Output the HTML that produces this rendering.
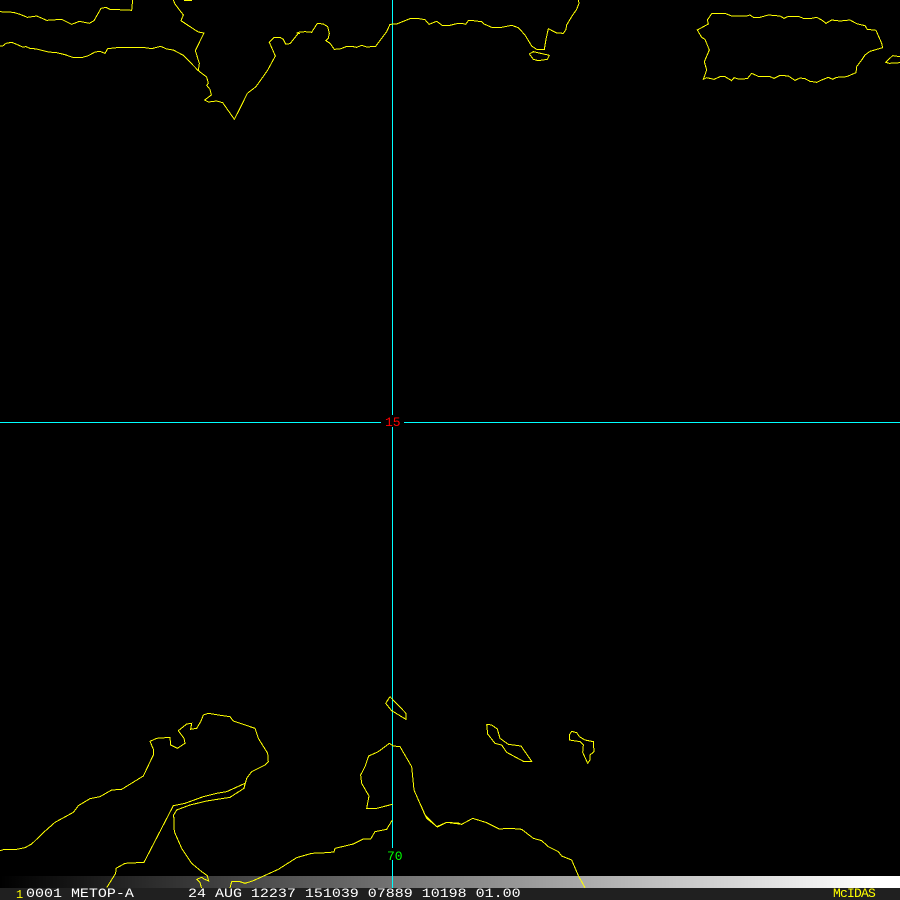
<!DOCTYPE html>
<html><head><meta charset="utf-8"><style>
html,body{margin:0;padding:0;background:#000;width:900px;height:900px;overflow:hidden}
svg{position:absolute;left:0;top:0;display:block}
polyline{fill:none;stroke:#ff0;stroke-width:1;vector-effect:non-scaling-stroke;shape-rendering:crispEdges}
text{font-family:"Liberation Mono",monospace;font-size:13px}
</style></head><body>
<svg width="900" height="900" viewBox="0 0 900 900">
<defs><linearGradient id="g" x1="0" x2="1" y1="0" y2="0"><stop offset="0" stop-color="#000"/><stop offset=".97" stop-color="#fff"/><stop offset="1" stop-color="#fff"/></linearGradient></defs>
<rect width="900" height="900" fill="#000"/>
<rect x="0" y="876" width="900" height="12" fill="url(#g)"/>
<rect x="392" y="0" width="1" height="415" fill="#0ff"/>
<rect x="392" y="427" width="1" height="421" fill="#0ff"/>
<rect x="392" y="860" width="1" height="28" fill="#0ff"/>
<rect x="0" y="422" width="381" height="1" fill="#0ff"/>
<rect x="404" y="422" width="496" height="1" fill="#0ff"/>
<g transform="scale(.33333)">
<polyline points="0,35 40,37 60,43 82,52 110,48 140,61 185,58 215,73 238,64 268,70 282,62 303,25 318,22 330,28 378,30 395,31 398,0"/>
<polyline points="0,138 8,138 18,130 35,127 50,133 68,141 78,140 90,145 110,147 145,156 170,158 195,164 218,172 248,172 265,167 285,156 300,154 315,160 323,146 350,143 435,143 455,146 482,139 500,147 520,150 550,166 595,212 620,231 625,250 620,256 630,268 634,285 614,300 625,306 650,303 668,308 703,358 720,325 742,280 768,260 802,212 826,168 808,127 822,113 840,112 850,118 857,132 870,131 895,100 900,100"/>
<polyline points="520,0 525,12 550,45 543,62 570,80 595,96 612,99 586,152 598,190 595,212"/>
<polyline points="552,1 576,1"/>
</g>
<g transform="translate(260 0) scale(.33333)">
<polyline points="110,100 115,97 135,95 155,97 172,70 190,72 203,80 208,100 205,115 198,122 210,130 223,148 240,147 258,140 280,140 290,142 305,136 320,141 347,139 380,95 390,73 410,72 450,56 470,55 495,59 507,73 530,64 548,77 570,76 590,71 610,71 617,73 625,62 640,62 665,65 672,72 695,82 725,82 755,76 775,83 795,105 815,138 830,148 853,148 858,118 865,86 890,99 910,100 918,88 920,75 935,50 950,28 957,10 955,0"/>
<polyline points="808,162 820,155 868,166 862,178 835,182 820,178 808,162"/>
</g>
<g transform="translate(690 0) scale(.33333)">
<polyline points="65,41 105,40 125,48 170,48 180,45 190,52 210,52 235,45 270,48 282,55 295,49 325,49 340,55 365,55 380,52 395,60 408,70 425,60 450,63 480,60 500,71 525,77 532,88 558,91 575,130 578,143 540,154 525,165 515,180 500,200 498,218 470,230 440,232 428,238 415,232 395,240 380,247 360,244 345,236 330,234 315,241 295,228 270,226 252,235 240,230 205,229 185,220 172,236 145,237 132,233 125,242 105,230 90,230 72,238 50,233 40,238 50,210 43,185 58,150 45,118 35,112 22,90 55,72 52,60 65,41"/>
<polyline points="630,170 608,167 587,187 598,190 630,188"/>
</g>
<g transform="translate(0 700) scale(.33333)">
<polyline points="0,452 10,449 45,449 75,443 95,432 130,398 165,367 220,337 235,317 270,296 300,290 335,270 365,268 430,228 460,165 461,150 450,124 470,115 510,112 512,135 532,145 555,130 552,115 535,92 560,72 575,70 572,88 590,85 602,65 610,45 625,40 655,45 690,50 700,63 765,85 775,115 803,160 805,185 795,195 755,215 740,235 732,265 690,292 620,303 570,315 530,330 521,345 523,395 545,445 575,490 605,515 622,527 626,543 612,537 605,532 590,538 600,548 605,565"/>
<polyline points="732,265 735,250 680,275 650,280 610,290 555,310 520,317 432,487 375,490 348,505 347,520 320,563"/>
</g>
<g transform="translate(220 690) scale(.33333)">
<polyline points="30,594 35,575 60,575 75,580 100,572 175,538 230,503 275,490 320,488 342,486 345,475 375,468 400,462 430,447 452,447 465,425 500,418 517,390"/>
<polyline points="510,20 497,40 515,62 558,88 558,70 510,20"/>
<polyline points="517,343 470,355 440,355 447,318 425,280 422,255 435,230 446,198 475,185 508,160 520,168 540,170 575,230 582,300 615,375 650,410 680,397 720,400"/>
</g>
<g transform="translate(420 710) scale(.33333)">
<polyline points="0,280 20,325 52,351 80,337 125,343 158,325 200,338 238,357 270,355 305,358 340,385 365,392 385,410 415,425 425,438 455,450 475,497 495,533"/>
<polyline points="200,43 215,45 232,57 240,85 265,103 303,108 335,154 312,155 260,127 245,105 225,100 203,72 200,43"/>
<polyline points="455,64 470,68 478,80 495,90 520,95 522,125 510,135 510,150 503,160 488,127 490,105 480,95 448,90 448,75 455,64"/>
</g>
<rect x="0" y="888" width="900" height="12" fill="#202020"/>
<text x="0" y="426" fill="#f00" transform="translate(385 0)">15</text>
<text x="0" y="860" fill="#0f0" transform="translate(387 0)">70</text>
<text x="16" y="898" fill="#ff0" style="font-size:12px">1</text>
<text x="0" y="897" fill="#fff" xml:space="preserve" transform="translate(26 0) scale(1.154 1)">0001 METOP-A</text>
<text x="0" y="897" fill="#fff" xml:space="preserve" transform="translate(188 0) scale(1.154 1)">24 AUG 12237 151039 07889 10198 01.00</text>
<text x="833" y="897" fill="#ff0" style="letter-spacing:-.8px">McIDAS</text>
</svg>
</body></html>
